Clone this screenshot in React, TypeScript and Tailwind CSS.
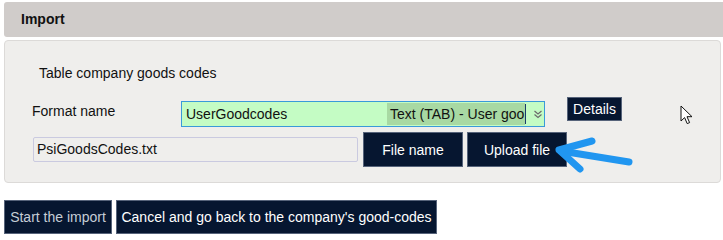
import * as React from 'react';

const btn =
  'flex items-center justify-center bg-[#061630] border border-[#56637a] text-[14px] leading-none';

function DoubleChevron() {
  return (
    <svg width="12" height="12" viewBox="0 0 12 12" fill="none" stroke="#6b6b6b" strokeWidth="1.2">
      <path d="M2.5 3 L6 6 L9.5 3" />
      <path d="M2.5 6.5 L6 9.5 L9.5 6.5" />
    </svg>
  );
}

function Pointer() {
  return (
    <svg width="14" height="20" viewBox="0 0 14 20">
      <path
        d="M1 1 L1 16 L4.6 12.6 L7.2 18.6 L9.6 17.6 L7 11.7 L12 11.7 Z"
        fill="#fff"
        stroke="#111"
        strokeWidth="1"
        strokeLinejoin="round"
      />
    </svg>
  );
}

export default function App() {
  return (
    <div className="w-[723px] h-[240px] bg-white pt-[2px] pl-[4px] font-['Liberation_Sans',Arial,sans-serif] text-[#111]">
      <div className="h-[35px] bg-[#d0ccca] rounded-l-[3px] flex items-center pl-[17px] text-[14px] font-bold">
        Import
      </div>

      <div className="mt-[3px] mr-[2px] h-[143px] bg-[#efeeec] border border-[#dcdad8] rounded-[4px] pt-[24px]">
        <div className="pl-[34px] text-[14px] leading-[16px]">Table company goods codes</div>

        <div className="mt-[16px] h-[30px] flex items-start">
          <div className="ml-[27px] w-[149px] mt-[6px] text-[14px] leading-[16px]">Format name</div>
          <div className="mt-[4px] w-[364px] h-[26px] bg-[#c4fcc4] border border-[#3a9ad9] flex items-center text-[14px]">
            <span className="pl-[4px] w-[205px]">UserGoodcodes</span>
            <span className="h-[22px] w-[138px] bg-[#a8d9a3] flex items-center pl-[3px] whitespace-nowrap overflow-hidden">
              Text (TAB) - User goo
            </span>
            <span className="w-[1px] h-[20px] bg-[#1a3a6a]" />
            <span className="ml-[6px] flex items-center">
              <DoubleChevron />
            </span>
          </div>
          <button className={`${btn} text-white ml-[22px] w-[55px] h-[24px]`}>Details</button>
          <div className="ml-[58px] mt-[8px]">
            <Pointer />
          </div>
        </div>

        <div className="relative mt-[5px] h-[35px] flex items-center">
          <div className="ml-[28px] w-[325px] h-[25px] border border-[#cacae0] rounded-[2px] flex items-center pl-[3px] text-[14px]">
            PsiGoodsCodes.txt
          </div>
          <button className={`${btn} text-white ml-[5px] w-[100px] h-[35px]`}>File name</button>
          <button className={`${btn} text-white ml-[4px] w-[100px] h-[35px]`}>Upload file</button>
          <svg
            className="absolute left-[544px] top-[4px]"
            width="86"
            height="40"
            viewBox="0 0 86 40"
            fill="none"
            stroke="#2196f0"
            strokeWidth="7"
            strokeLinecap="round"
            strokeLinejoin="round"
          >
            <path d="M80 26 L12 15" />
            <path d="M43 5 L10 14 L31 33" />
          </svg>
        </div>
      </div>

      <div className="mt-[17px] flex gap-[4px]">
        <button className={`${btn} text-[#c5cdd6] w-[108px] h-[34px]`}>Start the import</button>
        <button className={`${btn} text-white w-[321px] h-[34px]`}>Cancel and go back to the company's good-codes</button>
      </div>
    </div>
  );
}
